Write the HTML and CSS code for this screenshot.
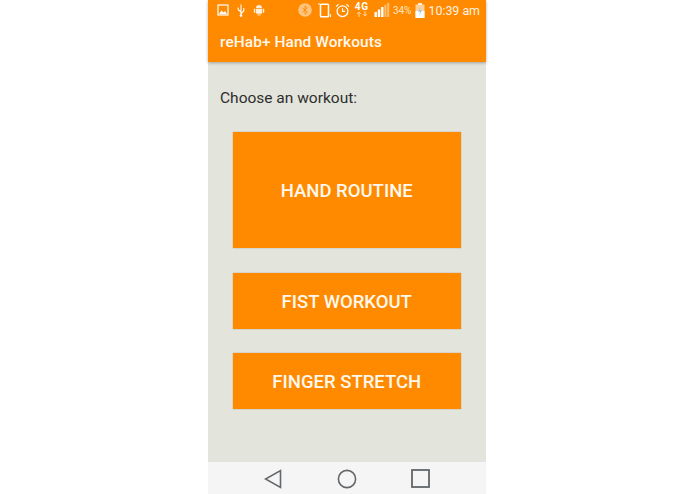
FILE: index.html
```html
<!DOCTYPE html>
<html lang="en">
<head>
<meta charset="utf-8">
<title>reHab+ Hand Workouts</title>
<link rel="stylesheet" href="styles.css">
</head>
<body>
<div class="phone">
  <header class="appbar">
    <div class="status">
      <div class="status-left">
        <svg class="ic" width="12" height="12" viewBox="0 0 12 12"><rect x="1" y="1" width="10" height="10" fill="none" stroke="#fff" stroke-width="1.2"/><path d="M2 10 L4.5 6.5 L6.5 8.5 L8 7 L10 10 Z" fill="#fff"/></svg>
        <svg class="ic" width="8" height="13" viewBox="0 0 8 13"><path d="M4 0.5 L4 12.5 M4 8 L1.2 5.8 L1.2 3.5 M4 9.5 L6.8 7 L6.8 4" fill="none" stroke="#fff" stroke-width="1.1"/><circle cx="4" cy="11.5" r="1.3" fill="#fff"/></svg>
        <svg class="ic" width="12" height="12" viewBox="0 0 12 12"><path d="M3 4 A3 3 0 0 1 9 4 Z M3 4.7 H9 V9.5 H7.4 V11.5 H6.4 V9.5 H5.6 V11.5 H4.6 V9.5 H3 Z" fill="#fff" opacity=".85"/><rect x="0.8" y="4.7" width="1.5" height="4" fill="#fff" opacity=".85"/><rect x="9.7" y="4.7" width="1.5" height="4" fill="#fff" opacity=".85"/></svg>
      </div>
      <div class="status-right">
        <svg class="ic bt" width="14" height="14" viewBox="0 0 14 14"><circle cx="7" cy="7" r="6.8" fill="#fff" opacity=".5"/><path d="M4.5 4.8 L9.3 9.2 L7 11.2 V2.8 L9.3 4.8 L4.5 9.2" fill="none" stroke="#ff8a00" stroke-width=".9"/></svg>
        <svg class="ic rot" width="13" height="15" viewBox="0 0 13 15"><rect x="2.5" y="1.2" width="8" height="12.6" rx=".8" fill="none" stroke="#fff" stroke-width="1.5"/><path d="M0 1 H2 M12.4 11 V14" stroke="#fff" stroke-width="1"/></svg>
        <svg class="ic alarm" width="15" height="15" viewBox="0 0 15 15"><circle cx="7.5" cy="8.2" r="5.4" fill="none" stroke="#fff" stroke-width="1.3"/><path d="M7.5 5 V8.4 H10 M1 3.6 L3.6 1.2 M14 3.6 L11.4 1.2" fill="none" stroke="#fff" stroke-width="1.1"/></svg>
        <span class="net"><span class="net-label">4G</span><svg width="14" height="6" viewBox="0 0 14 6"><path d="M4 6 V1.2 M2.2 2.8 L4 1 L5.8 2.8 M10 0 V4.8 M8.2 3.2 L10 5 L11.8 3.2" fill="none" stroke="#ffd8a0" stroke-width="1"/></svg></span>
        <svg class="ic" width="16" height="14" viewBox="0 0 16 14"><rect x="0.5" y="9" width="2.4" height="5" fill="#fff"/><rect x="3.8" y="6.5" width="2.4" height="7.5" fill="#fff"/><rect x="7.1" y="4" width="2.4" height="10" fill="#fff"/><rect x="10.4" y="1.8" width="2" height="12.2" fill="#fff" opacity=".45"/><rect x="13.2" y="0" width="2" height="14" fill="#fff" opacity=".45"/></svg>
        <span class="pct">34%</span>
        <svg class="ic batt" width="10" height="15" viewBox="0 0 10 15"><rect x="3" y="0" width="4" height="2" fill="#fff" opacity=".8"/><rect x="0.5" y="1.5" width="9" height="13.5" fill="#fff" opacity=".6"/><rect x="0.5" y="8" width="9" height="7" fill="#fff"/><path d="M5.6 3.5 L3 8.8 H5 L4.2 12.5 L7.2 7 H5.2 Z" fill="#a8c4e0"/></svg>
        <span class="clock">10:39 am</span>
      </div>
    </div>
    <div class="title">reHab+ Hand Workouts</div>
  </header>
  <main class="content">
    <p class="prompt">Choose an workout:</p>
    <div class="buttons">
      <button class="btn btn-tall">HAND ROUTINE</button>
      <button class="btn">FIST WORKOUT</button>
      <button class="btn">FINGER STRETCH</button>
    </div>
  </main>
  <nav class="navbar">
    <svg width="18" height="20" viewBox="0 0 18 20"><path d="M16.5 1.5 V18.5 L1.5 10 Z" fill="none" stroke="#63676a" stroke-width="1.6"/></svg>
    <svg class="home" width="20" height="20" viewBox="0 0 20 20"><circle cx="10" cy="10" r="8.6" fill="none" stroke="#63676a" stroke-width="1.6"/></svg>
    <svg width="19" height="19" viewBox="0 0 19 19"><rect x="1" y="1" width="17" height="17" fill="none" stroke="#63676a" stroke-width="1.8"/></svg>
  </nav>
</div>
</body>
</html>
```
FILE: styles.css
```css
* { box-sizing: border-box; }
html, body { margin: 0; height: 100%; background: #fff; }
body { display: flex; justify-content: center; overflow: hidden; font-family: Roboto, "Liberation Sans", sans-serif; }
.phone { width: 278px; height: 494px; margin-right: 1px; display: flex; flex-direction: column; background: #e3e4dc; }
.appbar { height: 62px; flex: none; background: #ff8a00; color: #fff; box-shadow: 0 1px 3px rgba(0,0,0,.3); position: relative; }
.status { height: 20px; padding: 0 6px 0 9px; display: flex; justify-content: space-between; align-items: center; }
.status-left { display: flex; align-items: center; gap: 8px; }
.status-right { display: flex; align-items: center; gap: 3px; }
.ic { display: block; flex: none; }
.bt { margin-right: 3px; }
.rot { margin-right: 1px; }
.net { display: flex; flex-direction: column; align-items: center; width: 18px; line-height: 8px; }
.net-label { font-size: 10px; font-weight: 700; letter-spacing: .8px; color: #fff; height: 8px; }
.pct { font-size: 10px; color: #ffe6c4; }
.batt { margin-left: 1px; }
.clock { font-size: 12.4px; color: #fff2e0; }
.title { padding: 14px 0 0 12px; font-size: 15.4px; font-weight: 500; line-height: 17px; letter-spacing: .1px; color: #fff8ee; }
.content { flex: 1; padding: 27px 25px 0 24.5px; }
.prompt { margin: 0 0 0 -12.5px; font-size: 15.5px; line-height: 18px; color: #2e2e2c; }
.buttons { margin-top: 25px; display: flex; flex-direction: column; gap: 24px; align-items: flex-start; }
.btn { height: 56px; width: 228.5px; border: 0; border-radius: 0; background: #ff8a00; box-shadow: 0 0 1px rgba(120,90,60,.6); color: #fff8ee; font: 500 18.5px/1 Roboto, sans-serif; padding: 2px 0 0; }
.btn-tall { height: 116px; margin-bottom: 1px; }
.navbar { height: 32px; flex: none; background: #f5f5f5; display: flex; justify-content: center; align-items: center; gap: 54.5px; padding: 1px 1px 0 0; }
.home { margin: 0 -1px 0 1px; }
```
